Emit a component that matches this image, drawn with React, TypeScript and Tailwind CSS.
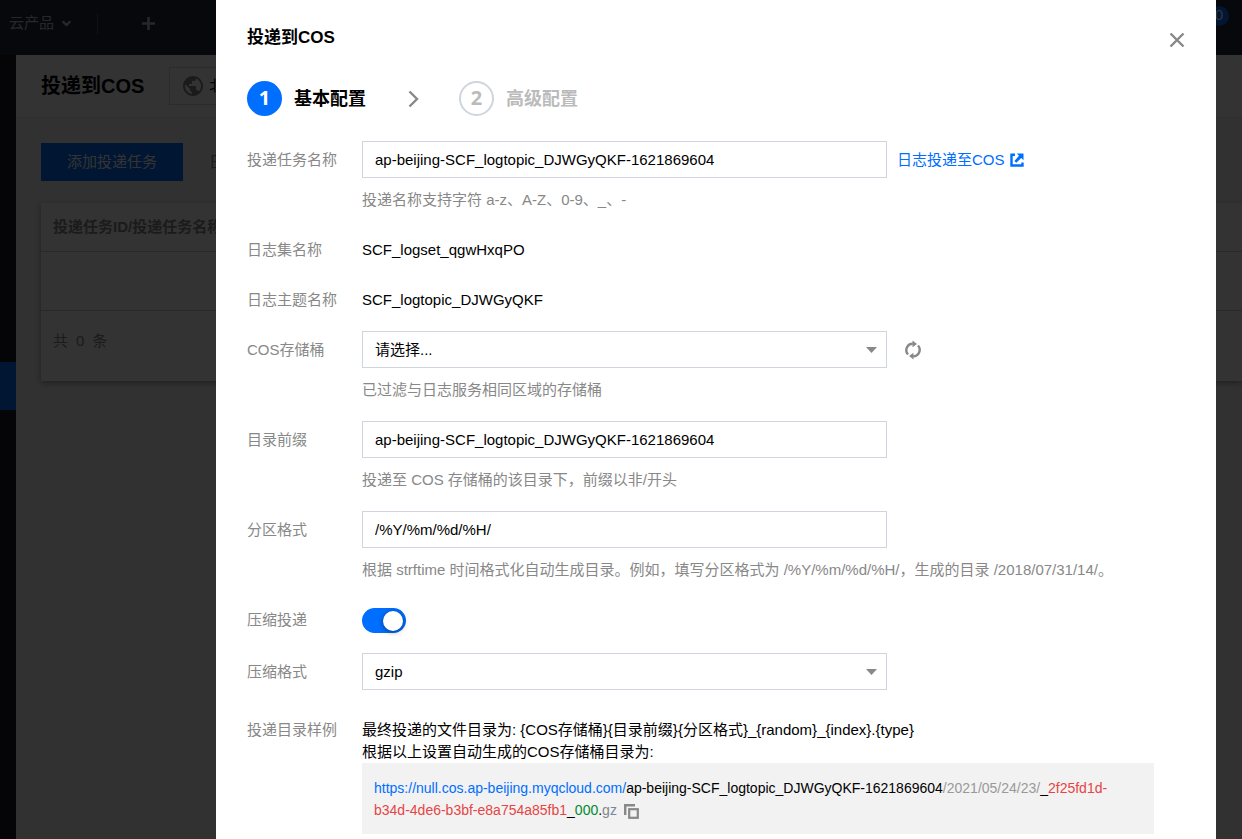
import { useState, type ReactNode } from "react";
import { ChevronDown } from "lucide-react";
import { MdPublic } from "react-icons/md";

const TASK_NAME = "ap-beijing-SCF_logtopic_DJWGyQKF-1621869604";

const fieldClass =
  "block h-[37px] w-full rounded-none border border-[#cfd5de] bg-white px-3 text-[15px] text-black outline-none focus:border-[#006eff]";

interface FormRowProps {
  label: string;
  htmlFor?: string;
  hint?: string;
  children: ReactNode;
}

function FormRow({ label, htmlFor, hint, children }: FormRowProps) {
  return (
    <div className="flex items-start">
      {htmlFor ? (
        <label
          htmlFor={htmlFor}
          className="w-[115px] shrink-0 leading-[37px] text-[#888]"
        >
          {label}
        </label>
      ) : (
        <span className="w-[115px] shrink-0 leading-[37px] text-[#888]">
          {label}
        </span>
      )}
      <div className="min-w-0 flex-1">
        <div className="flex min-h-[37px] items-center leading-[37px]">
          {children}
        </div>
        {hint && (
          <p className="pt-2.5 pb-1.5 leading-6 text-[#888]">{hint}</p>
        )}
      </div>
    </div>
  );
}

interface SelectFieldProps {
  id: string;
  options: string[];
}

function SelectField({ id, options }: SelectFieldProps) {
  return (
    <div className="relative w-full max-w-[525px]">
      <select
        id={id}
        className={`${fieldClass} appearance-none pr-8 leading-6`}
      >
        {options.map((option) => (
          <option key={option}>{option}</option>
        ))}
      </select>
      <svg
        className="pointer-events-none absolute top-1/2 right-2.5 -translate-y-1/2"
        width="11"
        height="6"
        viewBox="0 0 11 6"
        fill="#888"
      >
        <path d="M0 0h11L5.500 6z" />
      </svg>
    </div>
  );
}

function ExternalIcon() {
  return (
    <svg width="14" height="14" viewBox="0 0 14 14" fill="none">
      <path
        d="M5 1.800H1.500v10.700h11V9.500"
        stroke="#006eff"
        strokeWidth="2.400"
      />
      <path
        d="M6.800 0.600H13.500V7.200L11.300 5.100 6.300 9.800 4.400 7.900 9 2.800z"
        fill="#006eff"
      />
    </svg>
  );
}

function RefreshIcon() {
  return (
    <svg width="16" height="20" viewBox="0 0 16 20" fill="none">
      <path
        d="M3 14.500A6.400 6.400 0 0 1 7.800 3.800M13 5.500A6.400 6.400 0 0 1 8.200 16.200"
        stroke="#888"
        strokeWidth="2.400"
      />
      <path d="M7.500 0.500l4.500 3.400-4.500 3.300zM8.500 12.800v6.700L4 16.100z" fill="#888" />
    </svg>
  );
}

function CopyIcon() {
  return (
    <svg width="15" height="15" viewBox="0 0 15 15" fill="none" stroke="#888">
      <path d="M1.200 11V1.200H11" strokeWidth="2.400" />
      <rect x="5.200" y="5.200" width="8.600" height="8.600" strokeWidth="2.200" />
    </svg>
  );
}

function ConsolePage() {
  return (
    <div className="flex min-h-screen flex-col bg-[#f3f3f3]" aria-hidden="true">
      <header className="flex h-[55px] items-center bg-[#262b3d] pb-2 text-[#c0c4cc]">
        <span className="pl-[9px]">云产品</span>
        <ChevronDown size={13} strokeWidth={4} className="ml-1.5" />
        <span className="ml-6 h-5 w-px bg-[#5a5f70]" />
        <svg
          className="ml-[44px]"
          width="13"
          height="13"
          viewBox="0 0 13 13"
          stroke="currentColor"
          strokeWidth="2.600"
        >
          <path d="M6.500 0v13M0 6.500h13" />
        </svg>
        <span className="mr-[13px] mb-4 ml-auto flex h-5 items-center rounded-full bg-[#006eff] px-1.5 text-white">
          0
        </span>
      </header>
      <div className="flex flex-1">
        <aside className="w-4 shrink-0 bg-[#191c26] pt-[307px]">
          <div className="h-12 bg-[#006eff]" />
        </aside>
        <main className="min-w-0 flex-1">
          <div className="flex h-[63px] items-center border-b border-[#e8e8e8] bg-white pl-[25px]">
            <h1 className="text-xl font-bold text-black">投递到COS</h1>
            <div className="ml-[25px] flex h-[38px] w-40 items-center gap-1 border border-[#cfd5de] pl-[11px] text-black">
              <MdPublic size={24} className="text-[#888]" />
              北京
            </div>
          </div>
          <div className="flex items-center pt-[25px] pl-[25px] text-[#888]">
            <div className="flex h-[38px] w-[142px] items-center justify-center bg-[#006eff] text-white">
              添加投递任务
            </div>
            <span className="ml-[26px]">日志</span>
          </div>
          <div className="mt-[22px] ml-[25px] bg-white text-[#888] shadow-[0_2px_6px_rgba(0,0,0,0.35)]">
            <div className="flex h-[49px] items-center border-b border-[#ccc] pl-3 font-bold">
              投递任务ID/投递任务名称
            </div>
            <div className="h-[59px] border-b border-[#ccc]" />
            <div className="h-[70px] pt-[19px] pl-3 leading-[22px]">
              <span>共</span>
              <span className="mx-2">0</span>
              <span>条</span>
            </div>
          </div>
        </main>
      </div>
    </div>
  );
}

function Steps() {
  return (
    <ol className="mt-[31px] flex items-center text-lg font-bold">
      <li className="flex items-center gap-3">
        <span className="flex size-[35px] items-center justify-center rounded-full bg-[#006eff] pb-0.5 font-['Open_Sans',sans-serif] text-xl text-white">
          1
        </span>
        基本配置
      </li>
      <li className="flex items-center gap-3 text-[#bbb]">
        <svg
          className="mr-[27px] ml-[42px]"
          width="12"
          height="18"
          viewBox="0 0 12 18"
          fill="none"
        >
          <path d="M1.500 1.500L9 9l-7.500 7.500" stroke="#888" strokeWidth="2.400" />
        </svg>
        <span className="flex size-[35px] items-center justify-center rounded-full border-2 border-[#cfd5de] pb-0.5 font-['Open_Sans',sans-serif] text-xl">
          2
        </span>
        高级配置
      </li>
    </ol>
  );
}

export default function App() {
  const [taskName, setTaskName] = useState(TASK_NAME);
  const [prefix, setPrefix] = useState(TASK_NAME);
  const [partition, setPartition] = useState("/%Y/%m/%d/%H/");
  const [compress, setCompress] = useState(true);

  return (
    <div
      lang="zh-CN"
      className="h-screen overflow-hidden font-['Liberation_Sans','Noto_Sans_CJK_SC',sans-serif] text-[15px]"
    >
      <ConsolePage />
      <div className="fixed inset-0 flex bg-black/80 pr-[26px] pl-[216px]">
        <section
          role="dialog"
          aria-labelledby="drawer-title"
          className="min-w-0 flex-1 overflow-y-auto bg-white px-[31px] pt-[26px] text-black"
        >
          <div className="flex h-6 items-center justify-between">
            <h2 id="drawer-title" className="text-[17px] font-bold">
              投递到COS
            </h2>
            <button type="button" aria-label="关闭" className="pt-1">
              <svg width="16" height="16" viewBox="0 0 16 16" fill="none">
                <path
                  d="M1.500 1.500l13 13M14.500 1.500l-13 13"
                  stroke="#888"
                  strokeWidth="2.400"
                />
              </svg>
            </button>
          </div>

          <Steps />

          <form className="mt-[25px] flex flex-col gap-[13px]">
            <FormRow
              label="投递任务名称"
              htmlFor="task-name"
              hint="投递名称支持字符 a-z、A-Z、0-9、_、-"
            >
              <input
                id="task-name"
                type="text"
                value={taskName}
                onChange={(e) => setTaskName(e.target.value)}
                className={`${fieldClass} max-w-[525px]`}
              />
              <a
                href="#cos"
                className="ml-2.5 flex shrink-0 items-center gap-[5px] text-[#006eff]"
              >
                日志投递至COS
                <ExternalIcon />
              </a>
            </FormRow>

            <FormRow label="日志集名称">SCF_logset_qgwHxqPO</FormRow>
            <FormRow label="日志主题名称">SCF_logtopic_DJWGyQKF</FormRow>

            <FormRow
              label="COS存储桶"
              htmlFor="bucket"
              hint="已过滤与日志服务相同区域的存储桶"
            >
              <SelectField id="bucket" options={["请选择..."]} />
              <button type="button" aria-label="刷新" className="ml-[18px]">
                <RefreshIcon />
              </button>
            </FormRow>

            <FormRow
              label="目录前缀"
              htmlFor="prefix"
              hint="投递至 COS 存储桶的该目录下，前缀以非/开头"
            >
              <input
                id="prefix"
                type="text"
                value={prefix}
                onChange={(e) => setPrefix(e.target.value)}
                className={`${fieldClass} max-w-[525px]`}
              />
            </FormRow>

            <FormRow
              label="分区格式"
              htmlFor="partition"
              hint="根据 strftime 时间格式化自动生成目录。例如，填写分区格式为 /%Y/%m/%d/%H/，生成的目录 /2018/07/31/14/。"
            >
              <input
                id="partition"
                type="text"
                value={partition}
                onChange={(e) => setPartition(e.target.value)}
                className={`${fieldClass} max-w-[525px]`}
              />
            </FormRow>

            <FormRow label="压缩投递" htmlFor="compress">
              <label className="flex h-[39px] cursor-pointer items-center">
                <input
                  id="compress"
                  type="checkbox"
                  role="switch"
                  checked={compress}
                  onChange={(e) => setCompress(e.target.checked)}
                  className="peer sr-only"
                />
                <span className="flex h-[25px] w-11 items-center justify-start rounded-full bg-[#bbb] px-[3px] peer-checked:justify-end peer-checked:bg-[#006eff]">
                  <span className="size-5 rounded-full bg-white shadow-[0_1px_5px_rgba(0,0,0,0.5)]" />
                </span>
              </label>
            </FormRow>

            <FormRow label="压缩格式" htmlFor="format">
              <SelectField id="format" options={["gzip", "snappy", "lzop"]} />
            </FormRow>

            <div className="flex items-start pt-4 pr-[31px] leading-[22px]">
              <span className="w-[115px] shrink-0 text-[#888]">
                投递目录样例
              </span>
              <div className="min-w-0 flex-1">
                <p>
                  最终投递的文件目录为:
                  {" {COS存储桶}{目录前缀}{分区格式}_{random}_{index}.{type}"}
                </p>
                <p>根据以上设置自动生成的COS存储桶目录为:</p>
                <div className="bg-[#f2f2f2] px-3 pt-3.5 pb-[13px] text-sm leading-[22px]">
                  <span className="text-[#006eff]">
                    https://null.cos.ap-beijing.myqcloud.com/
                  </span>
                  {prefix}
                  <span className="text-[#999]">/2021/05/24/23/</span>_
                  <span className="text-[#e54545]">
                    2f25fd1d-b34d-4de6-b3bf-e8a754a85fb1
                  </span>
                  _<span className="text-[#008a2e]">000</span>.
                  <span className="text-[#7b8794]">gz</span>
                  <button
                    type="button"
                    aria-label="复制"
                    className="ml-[7px] align-middle"
                  >
                    <CopyIcon />
                  </button>
                </div>
              </div>
            </div>
          </form>
        </section>
      </div>
    </div>
  );
}
